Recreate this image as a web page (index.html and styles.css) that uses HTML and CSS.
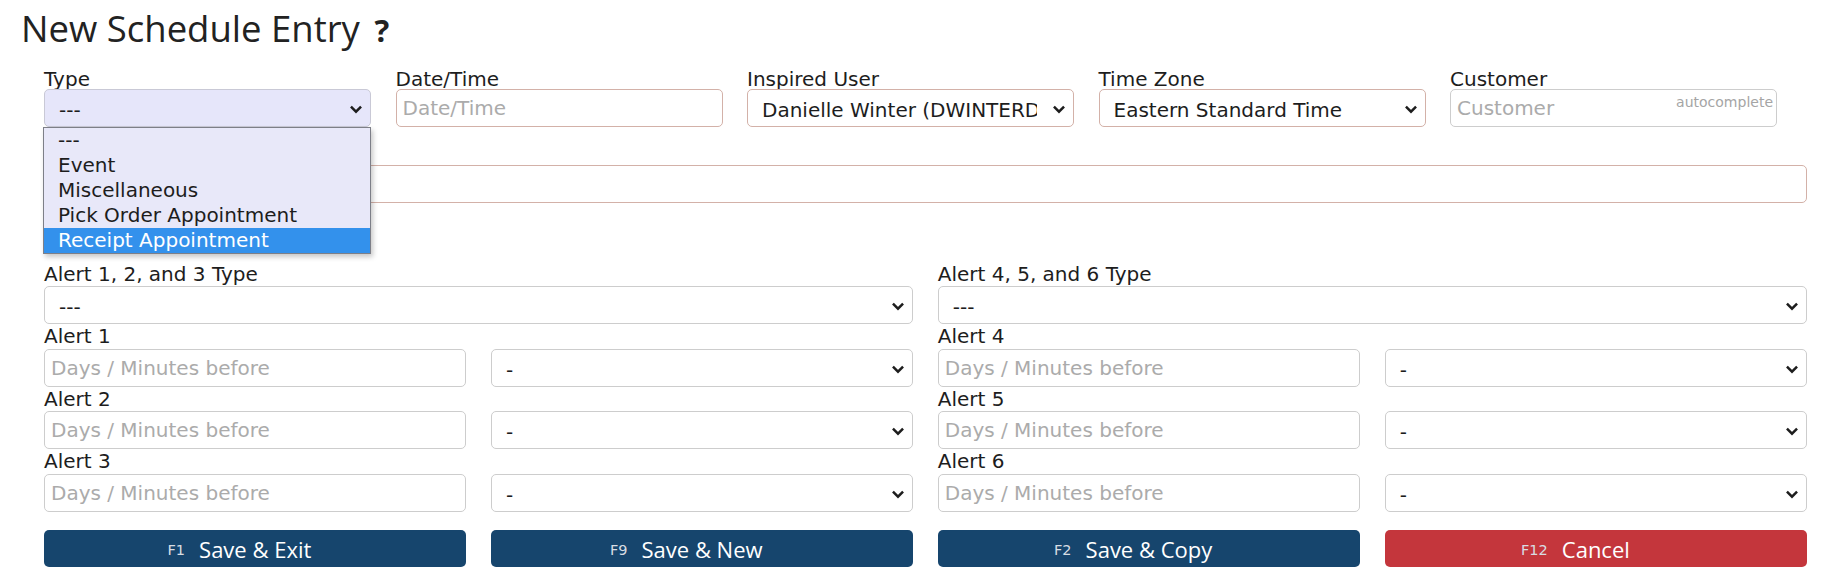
FILE: index.html
```html
<!DOCTYPE html>
<html lang="en">

<head>
    <meta charset="UTF-8">
    <meta name="viewport" content="width=device-width, initial-scale=1.0">
    <title>New Schedule Entry</title>

    <link rel="stylesheet" href="styles.css">
</head>

<body>
    <div class="page">
        <h1 class="title">New Schedule Entry <span class="help">?</span></h1>

        <form class="entry">
            <div class="topRow">
                <div class="field">
                    <label>Type</label>
                    <div class="selWrap">
                        <select class="ctl sel typeSel">
                            <option>---</option>
                        </select>
                        <svg class="chev" viewBox="0 0 12 8"><path d="M1.5 1.5 L6 6 L10.5 1.5" /></svg>
                        <!-- open option list of the Type select -->
                        <ul class="dropList">
                            <li>---</li>
                            <li>Event</li>
                            <li>Miscellaneous</li>
                            <li>Pick Order Appointment</li>
                            <li class="hover">Receipt Appointment</li>
                        </ul>
                    </div>
                </div>
                <div class="field">
                    <label>Date/Time</label>
                    <input class="ctl req" type="text" placeholder="Date/Time">
                </div>
                <div class="field">
                    <label>Inspired User</label>
                    <div class="selWrap">
                        <select class="ctl sel req userSel">
                            <option>Danielle Winter (DWINTERD)</option>
                        </select>
                        <svg class="chev" viewBox="0 0 12 8"><path d="M1.5 1.5 L6 6 L10.5 1.5" /></svg>
                    </div>
                </div>
                <div class="field">
                    <label>Time Zone</label>
                    <div class="selWrap">
                        <select class="ctl sel req">
                            <option>Eastern Standard Time</option>
                        </select>
                        <svg class="chev" viewBox="0 0 12 8"><path d="M1.5 1.5 L6 6 L10.5 1.5" /></svg>
                    </div>
                </div>
                <div class="field">
                    <label>Customer</label>
                    <div class="acWrap">
                        <input class="ctl" type="text" placeholder="Customer">
                        <span class="acTag">autocomplete</span>
                    </div>
                </div>
            </div>

            <!-- label of this row sits under the open list -->
            <div class="field wideRow">
                <label class="blank"></label>
                <input class="ctl req" type="text">
            </div>

            <div class="checkRow"></div>

            <div class="alerts">
                <div class="field half">
                    <label>Alert 1, 2, and 3 Type</label>
                    <div class="selWrap">
                        <select class="ctl sel"><option>---</option></select>
                        <svg class="chev" viewBox="0 0 12 8"><path d="M1.5 1.5 L6 6 L10.5 1.5" /></svg>
                    </div>
                </div>
                <div class="field half">
                    <label>Alert 4, 5, and 6 Type</label>
                    <div class="selWrap">
                        <select class="ctl sel"><option>---</option></select>
                        <svg class="chev" viewBox="0 0 12 8"><path d="M1.5 1.5 L6 6 L10.5 1.5" /></svg>
                    </div>
                </div>

                <div class="field">
                    <label>Alert 1</label>
                    <input class="ctl" type="text" placeholder="Days / Minutes before">
                </div>
                <div class="selWrap">
                    <select class="ctl sel"><option>-</option></select>
                    <svg class="chev" viewBox="0 0 12 8"><path d="M1.5 1.5 L6 6 L10.5 1.5" /></svg>
                </div>
                <div class="field">
                    <label>Alert 4</label>
                    <input class="ctl" type="text" placeholder="Days / Minutes before">
                </div>
                <div class="selWrap">
                    <select class="ctl sel"><option>-</option></select>
                    <svg class="chev" viewBox="0 0 12 8"><path d="M1.5 1.5 L6 6 L10.5 1.5" /></svg>
                </div>

                <div class="field">
                    <label>Alert 2</label>
                    <input class="ctl" type="text" placeholder="Days / Minutes before">
                </div>
                <div class="selWrap">
                    <select class="ctl sel"><option>-</option></select>
                    <svg class="chev" viewBox="0 0 12 8"><path d="M1.5 1.5 L6 6 L10.5 1.5" /></svg>
                </div>
                <div class="field">
                    <label>Alert 5</label>
                    <input class="ctl" type="text" placeholder="Days / Minutes before">
                </div>
                <div class="selWrap">
                    <select class="ctl sel"><option>-</option></select>
                    <svg class="chev" viewBox="0 0 12 8"><path d="M1.5 1.5 L6 6 L10.5 1.5" /></svg>
                </div>

                <div class="field">
                    <label>Alert 3</label>
                    <input class="ctl" type="text" placeholder="Days / Minutes before">
                </div>
                <div class="selWrap">
                    <select class="ctl sel"><option>-</option></select>
                    <svg class="chev" viewBox="0 0 12 8"><path d="M1.5 1.5 L6 6 L10.5 1.5" /></svg>
                </div>
                <div class="field">
                    <label>Alert 6</label>
                    <input class="ctl" type="text" placeholder="Days / Minutes before">
                </div>
                <div class="selWrap">
                    <select class="ctl sel"><option>-</option></select>
                    <svg class="chev" viewBox="0 0 12 8"><path d="M1.5 1.5 L6 6 L10.5 1.5" /></svg>
                </div>
            </div>

            <div class="btnRow">
                <div class="btn"><span class="btnText"><span class="key">F1</span>Save &amp; Exit</span></div>
                <div class="btn"><span class="btnText"><span class="key">F9</span>Save &amp; New</span></div>
                <div class="btn"><span class="btnText"><span class="key">F2</span>Save &amp; Copy</span></div>
                <div class="btn cancel"><span class="btnText"><span class="key">F12</span>Cancel</span></div>
            </div>
        </form>
    </div>
</body>

</html>
```

FILE: styles.css
```css
* {
    box-sizing: border-box;
}

body {
    margin: 0;
    background-color: #fff;
    color: #1d1d1d;
    font-family: "DejaVu Sans", Verdana, sans-serif;
    font-size: 20px;
}

.page {
    padding: 0 31px 0 21px;
}

.title {
    margin: 0 0 12px 0;
    padding-top: 3px;
    height: 52.5px;
    font-family: "Open Sans", "Noto Sans", sans-serif;
    font-weight: 400;
    font-size: 36.5px;
    line-height: 50px;
    color: #222;
}

.help {
    font-size: 31px;
    font-weight: 700;
    line-height: 1;
    margin-left: 5px;
}

.entry {
    margin-left: 23px;
    width: 1763px;
}

label {
    display: block;
    height: 24.5px;
    line-height: 25.5px;
    white-space: nowrap;
}

.topRow {
    display: grid;
    grid-template-columns: repeat(5, 327px);
    column-gap: 24.5px;
}

.topRow label {
    line-height: 28.5px;
}

.ctl {
    display: block;
    width: 100%;
    height: 38px;
    margin: 0;
    padding: 0 6px;
    border: 1px solid #cdcdcd;
    border-radius: 5px;
    background-color: #fff;
    font-family: "DejaVu Sans", Verdana, sans-serif;
    font-size: 20px;
    color: #1d1d1d;
    outline: none;
}

.ctl::placeholder {
    color: #ababab;
}

.req {
    border-color: #d3b1a8;
}

.sel {
    appearance: none;
    -webkit-appearance: none;
    padding: 4px 30px 0 14px;
    white-space: nowrap;
    overflow: hidden;
}

.userSel {
    padding-right: 36px;
}

.typeSel {
    background-color: #e6e6fa;
    border-color: #c9c9d6;
}

.selWrap,
.acWrap {
    position: relative;
}

.chev {
    position: absolute;
    right: 8px;
    top: 50%;
    width: 14px;
    height: 9px;
    margin-top: -3px;
    pointer-events: none;
}

.chev path {
    fill: none;
    stroke: #1d1d1d;
    stroke-width: 2.2;
}

.acTag {
    position: absolute;
    top: 5px;
    right: 4px;
    font-size: 14px;
    color: #a5a5a5;
}

.dropList {
    position: absolute;
    top: 38px;
    left: -1px;
    width: 328px;
    margin: 0;
    padding: 0;
    list-style: none;
    background-color: #e8e8f9;
    border: 1px solid #7d7f88;
    box-shadow: 2px 3px 5px rgba(0, 0, 0, 0.22);
    z-index: 5;
}

.dropList li {
    height: 25px;
    line-height: 25px;
    padding-left: 14px;
    white-space: nowrap;
}

.dropList li.hover {
    background-color: #3391ec;
    color: #fff;
}

.wideRow {
    margin-top: 13px;
}

.checkRow {
    height: 59px;
}

.alerts {
    display: grid;
    grid-template-columns: repeat(4, 1fr);
    column-gap: 24.5px;
    align-items: end;
}

.half {
    grid-column: span 2;
}

.btnRow {
    display: grid;
    grid-template-columns: repeat(4, 1fr);
    column-gap: 24.5px;
    margin-top: 18.5px;
}

.btn {
    height: 37px;
    border-radius: 5px;
    background-color: #16456d;
    color: #fff;
    display: flex;
    justify-content: center;
    align-items: center;
    font-family: "Open Sans", "Noto Sans", sans-serif;
    font-size: 22px;
    cursor: pointer;
}

.btn.cancel {
    background-color: #c4363c;
}

.btnText {
    position: relative;
}

.key {
    position: absolute;
    right: 100%;
    margin-right: 14px;
    top: 8px;
    font-family: "DejaVu Sans", Verdana, sans-serif;
    font-size: 14.5px;
    color: #d8dde3;
}
```
